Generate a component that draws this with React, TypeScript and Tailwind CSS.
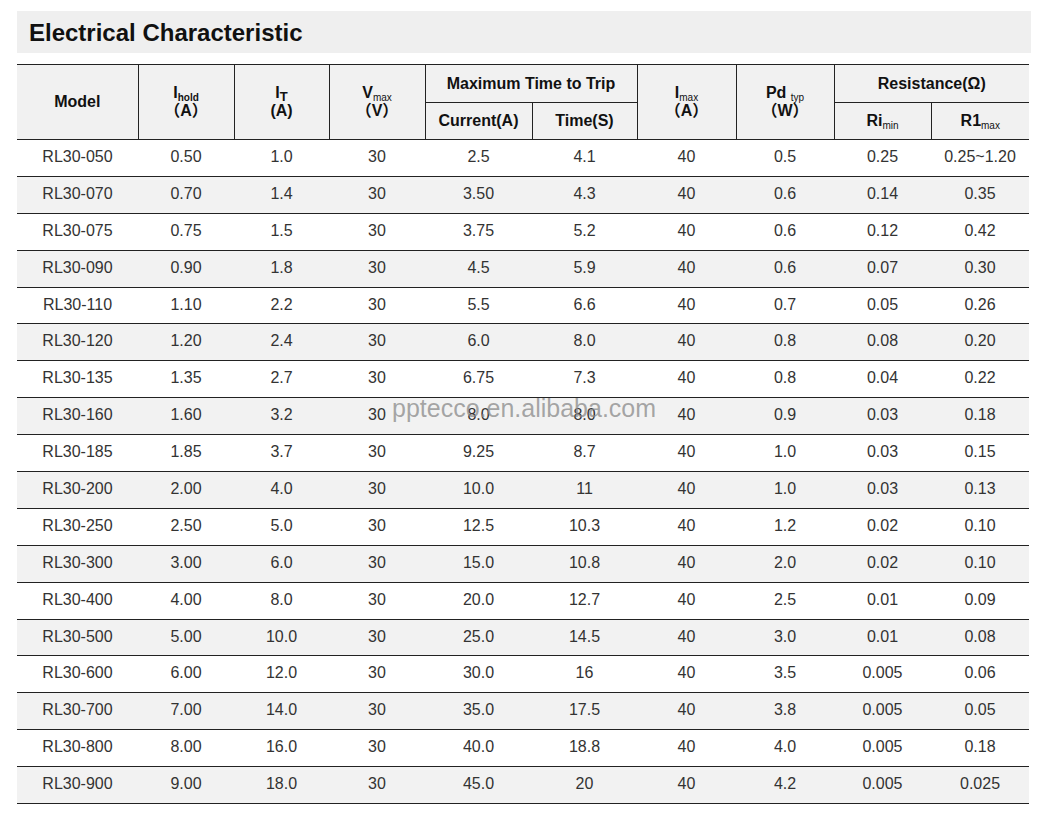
import React from "react";

const rows: string[][] = [
  ["RL30-050", "0.50", "1.0", "30", "2.5", "4.1", "40", "0.5", "0.25", "0.25~1.20"],
  ["RL30-070", "0.70", "1.4", "30", "3.50", "4.3", "40", "0.6", "0.14", "0.35"],
  ["RL30-075", "0.75", "1.5", "30", "3.75", "5.2", "40", "0.6", "0.12", "0.42"],
  ["RL30-090", "0.90", "1.8", "30", "4.5", "5.9", "40", "0.6", "0.07", "0.30"],
  ["RL30-110", "1.10", "2.2", "30", "5.5", "6.6", "40", "0.7", "0.05", "0.26"],
  ["RL30-120", "1.20", "2.4", "30", "6.0", "8.0", "40", "0.8", "0.08", "0.20"],
  ["RL30-135", "1.35", "2.7", "30", "6.75", "7.3", "40", "0.8", "0.04", "0.22"],
  ["RL30-160", "1.60", "3.2", "30", "8.0", "8.0", "40", "0.9", "0.03", "0.18"],
  ["RL30-185", "1.85", "3.7", "30", "9.25", "8.7", "40", "1.0", "0.03", "0.15"],
  ["RL30-200", "2.00", "4.0", "30", "10.0", "11", "40", "1.0", "0.03", "0.13"],
  ["RL30-250", "2.50", "5.0", "30", "12.5", "10.3", "40", "1.2", "0.02", "0.10"],
  ["RL30-300", "3.00", "6.0", "30", "15.0", "10.8", "40", "2.0", "0.02", "0.10"],
  ["RL30-400", "4.00", "8.0", "30", "20.0", "12.7", "40", "2.5", "0.01", "0.09"],
  ["RL30-500", "5.00", "10.0", "30", "25.0", "14.5", "40", "3.0", "0.01", "0.08"],
  ["RL30-600", "6.00", "12.0", "30", "30.0", "16", "40", "3.5", "0.005", "0.06"],
  ["RL30-700", "7.00", "14.0", "30", "35.0", "17.5", "40", "3.8", "0.005", "0.05"],
  ["RL30-800", "8.00", "16.0", "30", "40.0", "18.8", "40", "4.0", "0.005", "0.18"],
  ["RL30-900", "9.00", "18.0", "30", "45.0", "20", "40", "4.2", "0.005", "0.025"],
];

const widths = ["w-[121px]", "w-[96px]", "w-[95px]", "w-[96px]", "w-[107px]", "w-[105px]", "w-[99px]", "w-[98px]", "w-[97px]", "w-[98px]"];

const th = "border border-[#222] bg-[#f1f1f1] font-bold text-[16px] leading-[18px] text-[#111] text-center align-middle";
const sub = "text-[10px] leading-none font-normal align-[-3px]";

export default function App() {
  return (
    <div
      className="relative min-h-[817px] bg-white pt-[11px] pl-[17px]"
      style={{ fontFamily: '"Liberation Sans", Arial, "Noto Sans CJK SC", sans-serif' }}
    >
      {/* Title */}
      <div className="w-[1014px] h-[42px] bg-[#efefef] flex items-center pl-[12px] pt-[2px]">
        <h1 className="text-[24px] font-bold text-[#111]">Electrical Characteristic</h1>
      </div>

      <table className="mt-[11px] w-[1012px] border-collapse table-fixed">
        <colgroup>
          {widths.map((w, i) => (
            <col key={i} className={w} />
          ))}
        </colgroup>
        <thead>
          <tr className="h-[38px]">
            <th rowSpan={2} className={th + " border-l-0"}>Model</th>
            <th rowSpan={2} className={th}>
              <div className="h-[18px]">I<span className="text-[10px] leading-none align-[-3px]">hold</span></div>
              <div>（A）</div>
            </th>
            <th rowSpan={2} className={th}>
              <div className="h-[18px]">I<span className="text-[13px] leading-none align-[-3px]">T</span></div>
              <div>(A)</div>
            </th>
            <th rowSpan={2} className={th}>
              <div className="h-[18px]">V<span className={sub}>max</span></div>
              <div>（V）</div>
            </th>
            <th colSpan={2} className={th}>Maximum Time to Trip</th>
            <th rowSpan={2} className={th}>
              <div className="h-[18px]">I<span className={sub}>max</span></div>
              <div>（A）</div>
            </th>
            <th rowSpan={2} className={th}>
              <div className="h-[18px]">Pd <span className={sub}>typ</span></div>
              <div>（W）</div>
            </th>
            <th colSpan={2} className={th + " border-r-0"}>Resistance(Ω)</th>
          </tr>
          <tr className="h-[37px]">
            <th className={th}>Current(A)</th>
            <th className={th}>Time(S)</th>
            <th className={th}>
              Ri<span className={sub}>min</span>
            </th>
            <th className={th + " border-r-0"}>
              R1<span className={sub}>max</span>
            </th>
          </tr>
        </thead>
        <tbody>
          {rows.map((r, i) => (
            <tr key={r[0]} className={"h-[36.9px] border-b border-[#222] " + (i % 2 === 1 ? "bg-[#f2f2f2]" : "bg-white")}>
              {r.map((c, j) => (
                <td key={j} className="text-center align-middle text-[16px] text-[#333] pb-[2px]">
                  {c}
                </td>
              ))}
            </tr>
          ))}
        </tbody>
      </table>

      {/* watermark laid over the table */}
      <div className="absolute left-[392px] top-[396px] text-[25px] leading-none text-[#8a8a8a]/75 pointer-events-none">
        pptecco.en.alibaba.com
      </div>
    </div>
  );
}
